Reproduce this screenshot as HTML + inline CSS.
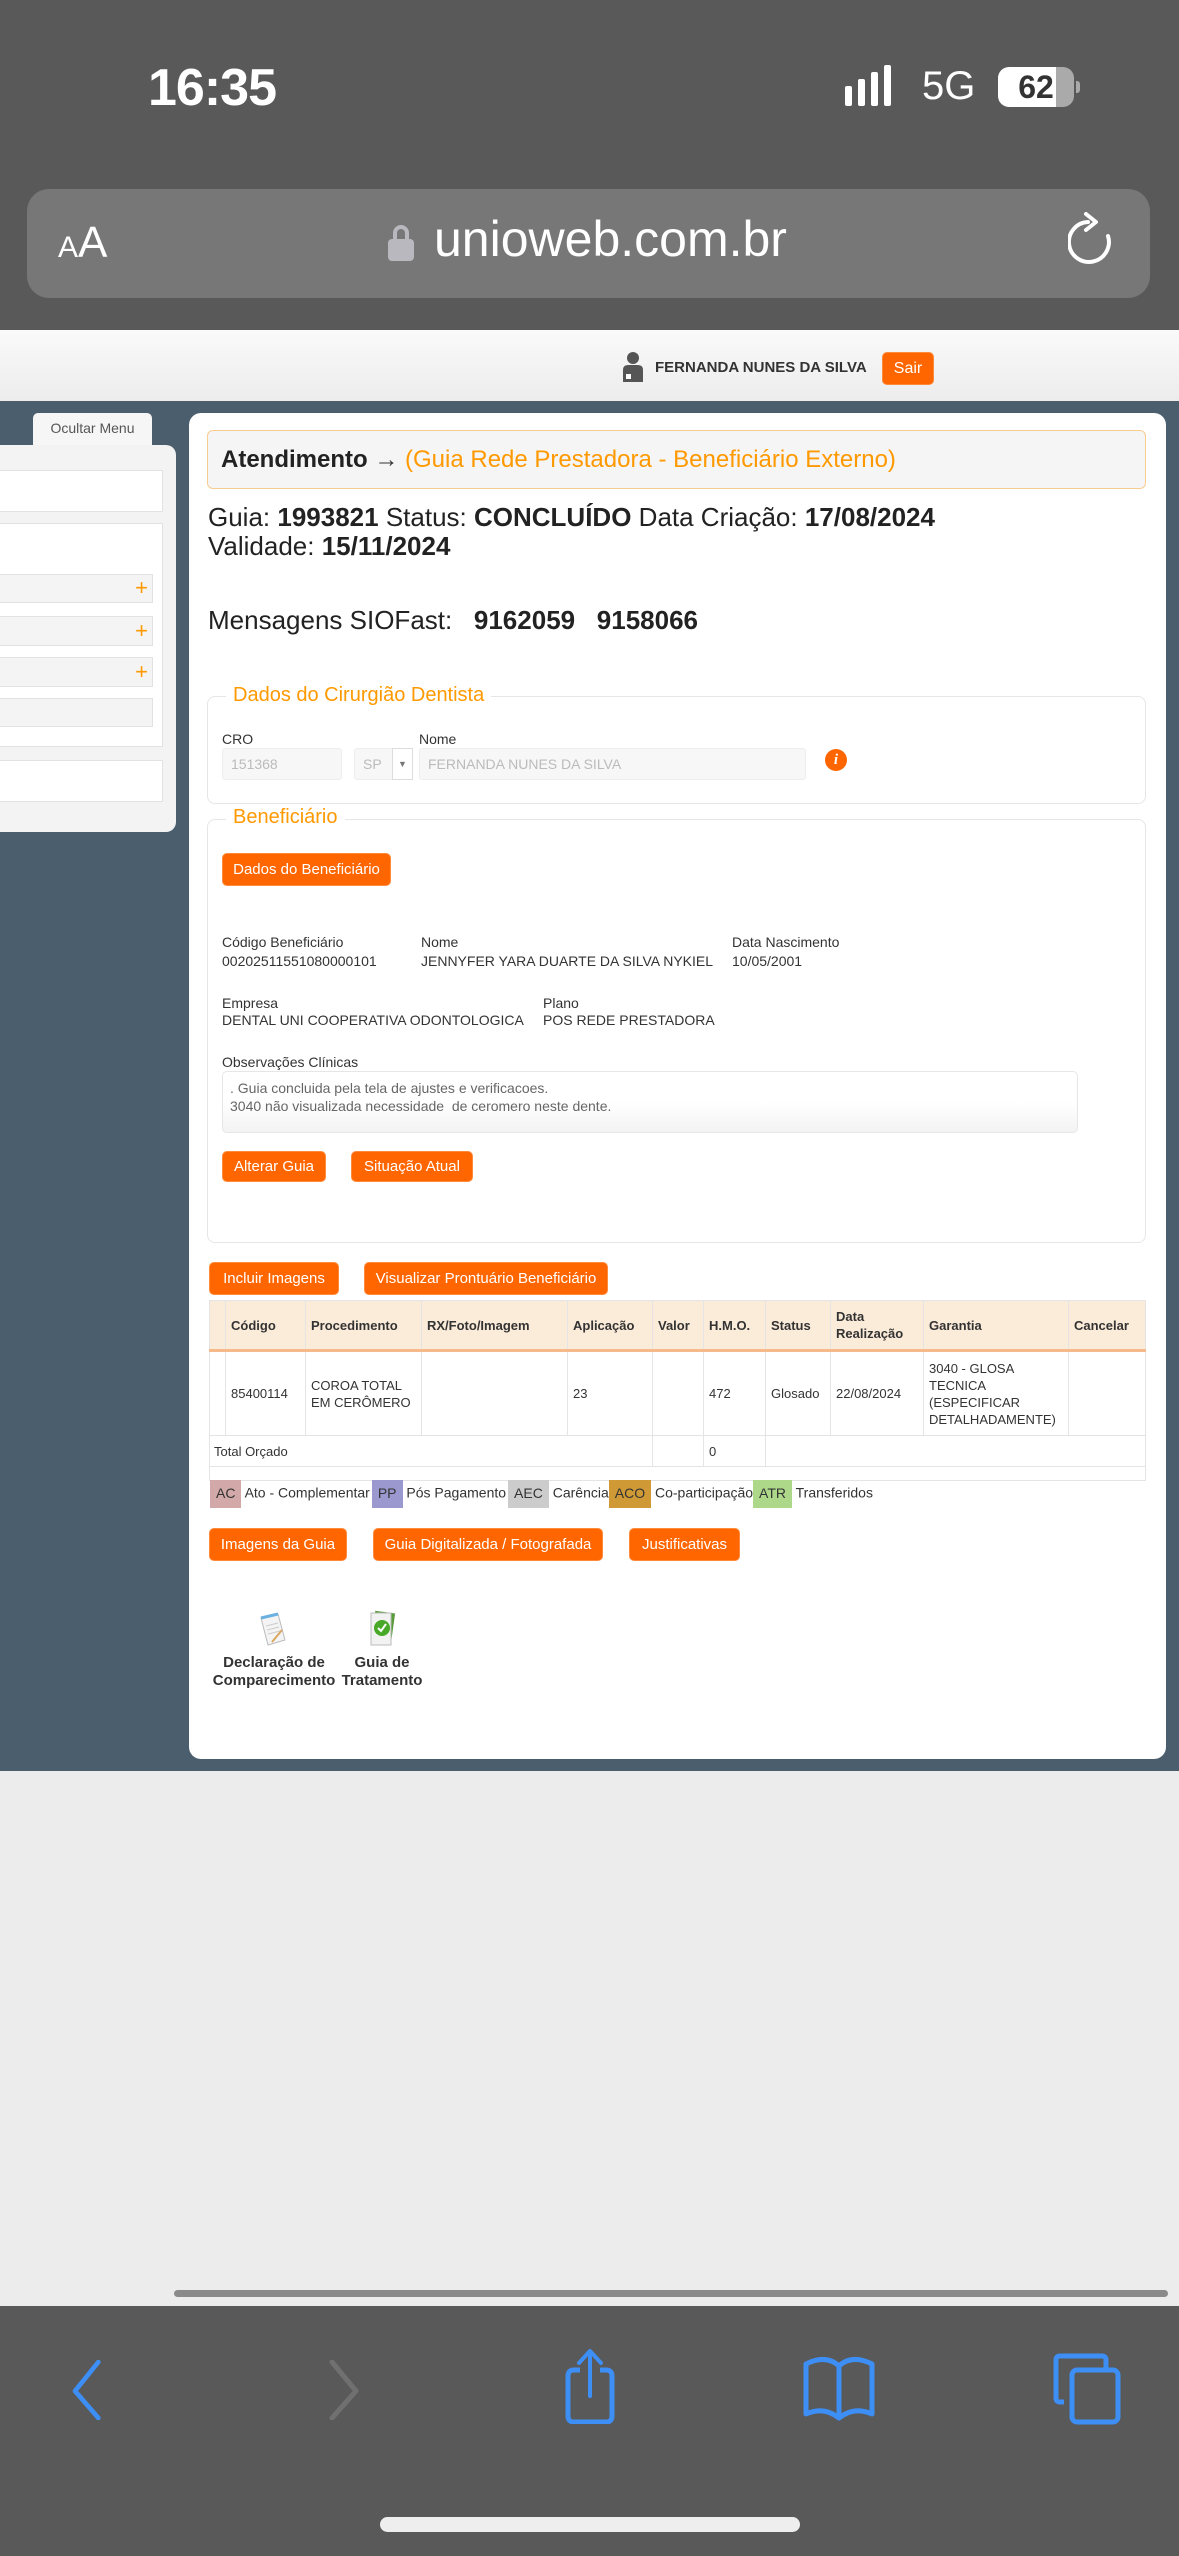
<!DOCTYPE html>
<html><head><meta charset="utf-8"><style>
*{margin:0;padding:0;box-sizing:border-box}
body{width:1179px;height:2556px;position:relative;overflow:hidden;background:#ececec;font-family:"Liberation Sans Narrow","Liberation Sans",sans-serif;color:#333}
.a{position:absolute}
.btn{position:absolute;background:#ff6600;color:#fff;border-radius:5px;font-size:15px;display:flex;align-items:center;justify-content:center;border:1px solid #ff8a3a;white-space:nowrap}
.lbl{position:absolute;font-size:14px;color:#333;white-space:nowrap}
.inp{position:absolute;background:#f7f7f7;border:1px solid #eee;border-radius:3px;color:#bbb;font-size:14px;padding-left:8px;display:flex;align-items:center}
table{border-collapse:collapse;font-size:13px}
td,th{border:1px solid #e4e4e4;padding:0 5px;text-align:left;vertical-align:middle}
th{font-weight:bold;background:#fbebd9;border-bottom:3px solid #f6b98a}
.leg{display:inline-block;padding:0 6px;height:28px;line-height:26px;vertical-align:middle}
</style></head><body>
<div class="a" style="left:0;top:0;width:1179px;height:330px;background:#595959"></div>
<div class="a" style="left:148px;top:58px;font-family:'Liberation Sans',sans-serif;font-size:52px;font-weight:bold;color:#fff;letter-spacing:-1px">16:35</div>
<div class="a" style="left:845px;top:86px;width:7px;height:20px;background:#fff;border-radius:2px"></div>
<div class="a" style="left:858px;top:79px;width:7px;height:27px;background:#fff;border-radius:2px"></div>
<div class="a" style="left:871px;top:72px;width:7px;height:34px;background:#fff;border-radius:2px"></div>
<div class="a" style="left:884px;top:65px;width:7px;height:41px;background:#fff;border-radius:2px"></div>
<div class="a" style="left:922px;top:64px;font-family:'Liberation Sans',sans-serif;font-size:40px;color:#fff">5G</div>
<div class="a" style="left:998px;top:67px;width:76px;height:40px;border-radius:11px;background:linear-gradient(90deg,#fff 0 76%,#aaa 76%);color:#333;font:bold 32px 'Liberation Sans',sans-serif;text-align:center;line-height:40px">62</div>
<div class="a" style="left:1076px;top:81px;width:4px;height:12px;background:#aaa;border-radius:0 3px 3px 0"></div>
<div class="a" style="left:27px;top:189px;width:1123px;height:109px;background:#777;border-radius:22px"></div>
<div class="a" style="left:58px;top:218px;font-family:'Liberation Sans',sans-serif;color:#fff"><span style="font-size:30px">A</span><span style="font-size:44px">A</span></div>
<div class="a" style="left:388px;top:225px;width:26px;height:36px;"><div style="position:absolute;left:5px;top:0;width:16px;height:20px;border:4px solid #b8b8be;border-radius:8px 8px 0 0"></div><div style="position:absolute;left:0;top:14px;width:26px;height:22px;background:#b8b8be;border-radius:4px"></div></div>
<div class="a" style="left:434px;top:210px;font-family:'Liberation Sans',sans-serif;font-size:50px;color:#fff">unioweb.com.br</div>
<svg class="a" style="left:1068px;top:212px" width="50" height="60" viewBox="0 0 50 60"><path d="M20 10 A20 20 0 1 0 40 24" fill="none" stroke="#fff" stroke-width="4" stroke-linecap="round"/><path d="M18 2 L28 10 L18 18" fill="none" stroke="#fff" stroke-width="4" stroke-linecap="round" stroke-linejoin="round"/></svg>

<div class="a" style="left:0;top:330px;width:1179px;height:72px;background:linear-gradient(#fafafa,#ececec)"></div>
<svg class="a" style="left:622px;top:352px" width="22" height="30" viewBox="0 0 22 30"><circle cx="11" cy="6" r="6" fill="#555"/><path d="M1 30 V18 Q1 13 6 13 H16 Q21 13 21 18 V30 Z" fill="#555"/><rect x="4" y="22" width="5" height="5" fill="#fff"/></svg>
<div class="a" style="left:655px;top:359px;font-size:15px;font-weight:bold;color:#333">FERNANDA NUNES DA SILVA</div>
<div class="btn" style="left:882px;top:352px;width:52px;height:33px;font-size:16px">Sair</div>

<div class="a" style="left:0;top:401px;width:1179px;height:1370px;background:#4b5e6d"></div>
<div class="a" style="left:33px;top:413px;width:119px;height:34px;background:#f6f6f6;border-radius:5px 5px 0 0;font-size:14px;color:#555;text-align:center;line-height:30px">Ocultar Menu</div>
<div class="a" style="left:0;top:445px;width:176px;height:387px;background:#f3f3f3;border-radius:0 10px 10px 0"></div>
<div class="a" style="left:0;top:470px;width:163px;height:42px;background:#fff;border:1px solid #e2e2e2;border-left:0"></div>
<div class="a" style="left:0;top:523px;width:163px;height:224px;background:#fff;border:1px solid #e2e2e2;border-left:0"></div>
<div class="a" style="left:0;top:574px;width:153px;height:29px;background:#f4f4f4;border:1px solid #e2e2e2;border-left:0;color:#f90;font-size:22px;text-align:right;padding-right:4px;line-height:26px">+</div>
<div class="a" style="left:0;top:616px;width:153px;height:30px;background:#f4f4f4;border:1px solid #e2e2e2;border-left:0;color:#f90;font-size:22px;text-align:right;padding-right:4px;line-height:27px">+</div>
<div class="a" style="left:0;top:657px;width:153px;height:30px;background:#f4f4f4;border:1px solid #e2e2e2;border-left:0;color:#f90;font-size:22px;text-align:right;padding-right:4px;line-height:27px">+</div>
<div class="a" style="left:0;top:698px;width:153px;height:29px;background:#f4f4f4;border:1px solid #e2e2e2;border-left:0"></div>
<div class="a" style="left:0;top:760px;width:163px;height:42px;background:#fff;border:1px solid #e2e2e2;border-left:0"></div>

<div class="a" style="left:189px;top:413px;width:977px;height:1346px;background:#fff;border-radius:12px"></div>
<div class="a" style="left:207px;top:430px;width:939px;height:59px;background:#f5f5f5;border:1px solid #f8cc90;border-radius:6px;padding-left:13px;line-height:57px;font-size:24px;white-space:nowrap"><b style="color:#222">Atendimento</b> → <span style="color:#f90">(Guia Rede Prestadora - Beneficiário Externo)</span></div>
<div class="a" style="left:208px;top:502px;font-size:26px;white-space:nowrap;color:#222">Guia: <b>1993821</b> Status: <b>CONCLUÍDO</b> Data Criação: <b>17/08/2024</b></div>
<div class="a" style="left:208px;top:531px;font-size:26px;white-space:nowrap;color:#222">Validade: <b>15/11/2024</b></div>
<div class="a" style="left:208px;top:605px;font-size:26px;white-space:nowrap;color:#222">Mensagens SIOFast: &nbsp; <b>9162059</b> &nbsp; <b>9158066</b></div>

<div class="a" style="left:207px;top:696px;width:939px;height:108px;border:1px solid #e6e6e6;border-radius:8px"></div>
<div class="a" style="left:226px;top:684px;background:#fff;padding:0 7px;color:#f90;font-size:20px">Dados do Cirurgião Dentista</div>
<div class="lbl" style="left:222px;top:731px">CRO</div>
<div class="lbl" style="left:419px;top:731px">Nome</div>
<div class="inp" style="left:222px;top:748px;width:120px;height:32px">151368</div>
<div class="inp" style="left:354px;top:748px;width:59px;height:32px">SP</div>
<div class="a" style="left:392px;top:748px;width:21px;height:32px;border:1px solid #ddd;background:#fff;font-size:9px;color:#777;text-align:center;line-height:30px">▼</div>
<div class="inp" style="left:419px;top:748px;width:387px;height:32px">FERNANDA NUNES DA SILVA</div>
<div class="a" style="left:825px;top:749px;width:22px;height:22px;border-radius:50%;background:#f60;color:#fff;font:italic bold 15px 'Liberation Serif',serif;text-align:center;line-height:22px">i</div>

<div class="a" style="left:207px;top:819px;width:939px;height:424px;border:1px solid #e6e6e6;border-radius:8px"></div>
<div class="a" style="left:226px;top:806px;background:#fff;padding:0 7px;color:#f90;font-size:20px">Beneficiário</div>
<div class="btn" style="left:222px;top:853px;width:169px;height:33px">Dados do Beneficiário</div>
<div class="lbl" style="left:222px;top:934px">Código Beneficiário</div>
<div class="lbl" style="left:222px;top:953px">00202511551080000101</div>
<div class="lbl" style="left:421px;top:934px">Nome</div>
<div class="lbl" style="left:421px;top:953px">JENNYFER YARA DUARTE DA SILVA NYKIEL</div>
<div class="lbl" style="left:732px;top:934px">Data Nascimento</div>
<div class="lbl" style="left:732px;top:953px">10/05/2001</div>
<div class="lbl" style="left:222px;top:995px">Empresa</div>
<div class="lbl" style="left:222px;top:1012px">DENTAL UNI COOPERATIVA ODONTOLOGICA</div>
<div class="lbl" style="left:543px;top:995px">Plano</div>
<div class="lbl" style="left:543px;top:1012px">POS REDE PRESTADORA</div>
<div class="lbl" style="left:222px;top:1054px">Observações Clínicas</div>
<div class="a" style="left:222px;top:1071px;width:856px;height:62px;border:1px solid #e6e6e6;border-radius:5px;background:linear-gradient(#fff 50%,#f3f3f3);font-size:14px;color:#666;padding:7px 7px;line-height:18px">. Guia concluida pela tela de ajustes e verificacoes.<br>3040 não visualizada necessidade &nbsp;de ceromero neste dente.</div>
<div class="btn" style="left:222px;top:1151px;width:104px;height:31px">Alterar Guia</div>
<div class="btn" style="left:351px;top:1151px;width:122px;height:31px">Situação Atual</div>

<div class="btn" style="left:209px;top:1262px;width:130px;height:33px">Incluir Imagens</div>
<div class="btn" style="left:364px;top:1262px;width:244px;height:33px">Visualizar Prontuário Beneficiário</div>

<table class="a" style="left:209px;top:1300px;width:937px">
<tr style="height:50px"><th style="width:16px;padding:0"></th><th style="width:80px">Código</th><th style="width:116px">Procedimento</th><th style="width:146px">RX/Foto/Imagem</th><th style="width:85px">Aplicação</th><th style="width:51px">Valor</th><th style="width:62px">H.M.O.</th><th style="width:65px">Status</th><th style="width:93px;line-height:17px">Data<br>Realização</th><th style="width:145px">Garantia</th><th>Cancelar</th></tr>
<tr style="height:85px"><td style="padding:0"></td><td>85400114</td><td style="line-height:17px;white-space:nowrap">COROA TOTAL<br>EM CERÔMERO</td><td></td><td>23</td><td></td><td>472</td><td>Glosado</td><td>22/08/2024</td><td style="line-height:17px">3040 - GLOSA<br>TECNICA<br>(ESPECIFICAR<br>DETALHADAMENTE)</td><td></td></tr>
<tr style="height:31px"><td colspan="5" style="padding-left:4px">Total Orçado</td><td></td><td>0</td><td colspan="4"></td></tr>
<tr style="height:14px"><td colspan="11"></td></tr>
</table>
<div class="a" style="left:210px;top:1480px;font-size:14px;white-space:nowrap;color:#333">
<span class="leg" style="background:#d2a8a8">AC</span> Ato - Complementar<span class="leg" style="background:#9a98cf;margin-left:2px">PP</span> Pós Pagamento<span class="leg" style="background:#ccc;margin-left:2px">AEC</span> Carência<span class="leg" style="background:#cf9a35">ACO</span> Co-participação<span class="leg" style="background:#add889">ATR</span> Transferidos</div>

<div class="btn" style="left:209px;top:1528px;width:138px;height:33px">Imagens da Guia</div>
<div class="btn" style="left:373px;top:1528px;width:230px;height:33px">Guia Digitalizada / Fotografada</div>
<div class="btn" style="left:629px;top:1528px;width:111px;height:33px">Justificativas</div>

<svg class="a" style="left:258px;top:1612px" width="30" height="36" viewBox="0 0 30 36"><path d="M3 6 L20 2 L27 28 L10 33 Z" fill="#f4f4f4" stroke="#bbb"/><path d="M3 6 L20 2" stroke="#6ab0e0" stroke-width="3"/><path d="M8 14 L20 11 M9 18 L21 15 M10 22 L22 19" stroke="#ccc"/><path d="M14 30 L24 18" stroke="#d9a860" stroke-width="2"/></svg>
<svg class="a" style="left:367px;top:1610px" width="30" height="38" viewBox="0 0 30 38"><rect x="6" y="2" width="20" height="32" fill="#5a9c3a" transform="rotate(8 16 18)"/><rect x="4" y="3" width="20" height="32" fill="#f2f2f2" stroke="#bbb"/><circle cx="15" cy="18" r="8" fill="#48a828"/><path d="M11 18 L14 21 L19 14" stroke="#fff" stroke-width="2" fill="none"/></svg>
<div class="a" style="left:209px;top:1654px;width:130px;text-align:center;font-size:15px;font-weight:bold;line-height:18px;color:#333">Declaração de<br>Comparecimento</div>
<div class="a" style="left:338px;top:1654px;width:88px;text-align:center;font-size:15px;font-weight:bold;line-height:18px;color:#333">Guia de<br>Tratamento</div>

<div class="a" style="left:174px;top:2290px;width:994px;height:7px;background:#8a8a8a;border-radius:4px"></div>

<div class="a" style="left:0;top:2306px;width:1179px;height:250px;background:#595959"></div>
<svg class="a" style="left:66px;top:2360px" width="40" height="60" viewBox="0 0 40 60"><path d="M32 2 L6 31 L32 58" fill="none" stroke="#3d8ef5" stroke-width="5" stroke-linecap="round" stroke-linejoin="round" transform="scale(0.9 1) translate(4 0)"/></svg>
<svg class="a" style="left:322px;top:2360px" width="40" height="60" viewBox="0 0 40 60"><path d="M10 2 L34 31 L10 58" fill="none" stroke="#707070" stroke-width="5" stroke-linecap="round" stroke-linejoin="round"/></svg>
<svg class="a" style="left:560px;top:2348px" width="60" height="76" viewBox="0 0 60 76"><path d="M20 22 H14 Q8 22 8 28 V68 Q8 74 14 74 H46 Q52 74 52 68 V28 Q52 22 46 22 H40" fill="none" stroke="#3d8ef5" stroke-width="5"/><path d="M30 48 V4 M19 15 L30 3 L41 15" fill="none" stroke="#3d8ef5" stroke-width="4" stroke-linecap="round" stroke-linejoin="round"/></svg>
<svg class="a" style="left:802px;top:2356px" width="74" height="66" viewBox="0 0 74 66"><path d="M37 10 Q24 -2 4 8 V58 Q22 50 37 62 Q52 50 70 58 V8 Q50 -2 37 10 Z M37 10 V62" fill="none" stroke="#3d8ef5" stroke-width="5" stroke-linejoin="round"/></svg>
<svg class="a" style="left:1052px;top:2352px" width="72" height="74" viewBox="0 0 72 74"><path d="M54 16 V8 Q54 4 50 4 H8 Q4 4 4 8 V46 Q4 50 8 50 H12" fill="none" stroke="#3d8ef5" stroke-width="5"/><rect x="20" y="18" width="46" height="52" rx="5" fill="none" stroke="#3d8ef5" stroke-width="5"/></svg>
<div class="a" style="left:380px;top:2517px;width:420px;height:15px;background:#eee;border-radius:8px"></div>
</body></html>
